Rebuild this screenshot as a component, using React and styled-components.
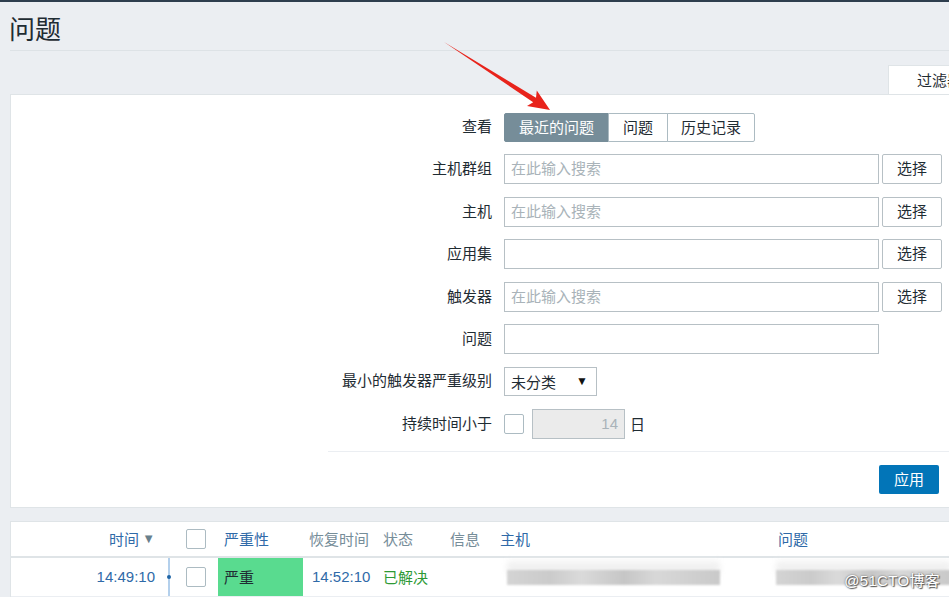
import React from 'react'
import styled, { createGlobalStyle } from 'styled-components'

const GlobalStyle = createGlobalStyle`
  html, body {
    margin: 0;
    padding: 0;
    background: #ebeef2;
    overflow: hidden;
  }
  body {
    font-family: "Liberation Sans", "Noto Sans CJK SC", sans-serif;
    font-size: 15px;
    color: #1f2c33;
  }
`

const Page = styled.div`
  position: relative;
  width: 975px;
  border-top: 2px solid #2e3e4e;
`

const Header = styled.div`
  height: 49px;
  margin-left: 10px;
  display: flex;
  align-items: center;
  padding-top: 2px;
  box-sizing: border-box;
  border-bottom: 1px solid #dde2e6;
`

const Title = styled.h1`
  margin: 0 0 0 -1px;
  font-size: 26px;
  font-weight: normal;
  color: #1f2c33;
`

const TabRow = styled.div`
  display: flex;
  justify-content: flex-end;
  margin-top: 14px;
`

const Tab = styled.div`
  height: 29px;
  line-height: 29px;
  padding: 0 12px 0 28px;
  background: #fff;
  border: 1px solid #dfe4e7;
  border-bottom: none;
  box-sizing: border-box;
  font-size: 15px;
`

const Panel = styled.div`
  margin-left: 10px;
  background: #fff;
  border: 1px solid #dfe4e7;
  border-right: none;
`

const FilterPanel = styled(Panel)`
  padding: 17px 0 13px;
`

const Form = styled.div`
  display: grid;
  grid-template-columns: 481px auto;
  column-gap: 12px;
  row-gap: 12.4px;
  align-items: center;
`

const Label = styled.div`
  text-align: right;
  line-height: 30px;
  white-space: nowrap;
`

const Field = styled.div`
  display: flex;
  align-items: center;
  gap: 3px;
`

const Segments = styled.div`
  display: flex;
`

const Segment = styled.div`
  height: 29px;
  line-height: 27px;
  padding: 0 14px;
  box-sizing: border-box;
  border: 1px solid ${p => (p.$active ? '#768d99' : '#acbbc2')};
  margin-left: -1px;
  background: ${p => (p.$active ? '#768d99' : '#fff')};
  color: ${p => (p.$active ? '#fff' : '#1f2c33')};
  &:first-child {
    margin-left: 0;
    border-radius: 2px 0 0 2px;
  }
  &:last-child {
    padding: 0 13px;
    border-radius: 0 2px 2px 0;
  }
`

const TextInput = styled.div`
  width: ${p => p.$w || 375}px;
  height: 30px;
  line-height: 28px;
  box-sizing: border-box;
  border: 1px solid #b7c0c5;
  padding: 0 6px;
  color: #a9b3b9;
  background: ${p => (p.$disabled ? '#ebebeb' : '#fff')};
  text-align: ${p => (p.$right ? 'right' : 'left')};
`

const SelectButton = styled.div`
  width: 60px;
  height: 30px;
  line-height: 28px;
  box-sizing: border-box;
  border: 1px solid #b7c0c5;
  border-radius: 2px;
  text-align: center;
  background: #fff;
`

const Select = styled.div`
  width: 93px;
  height: 29px;
  box-sizing: border-box;
  border: 1px solid #b7c0c5;
  padding: 0 8px 0 6px;
  display: flex;
  align-items: center;
  justify-content: space-between;
  span:last-child {
    font-size: 12px;
    color: #111;
  }
`

const Check = styled.div`
  width: 20px;
  height: 20px;
  box-sizing: border-box;
  border: 1px solid #acbbc2;
  border-radius: 2px;
  background: #fff;
`

const DurationField = styled(Field)`
  gap: 8px;
  span {
    margin-left: -3px;
  }
`

const Footer = styled.div`
  margin: 12px 0 0 317px;
  padding: 13px 36px 0 0;
  border-top: 1px solid #ebeef2;
  display: flex;
  justify-content: flex-end;
`

const ApplyButton = styled.div`
  width: 60px;
  height: 29px;
  line-height: 29px;
  text-align: center;
  background: #0275b8;
  color: #fff;
  border-radius: 2px;
`

const TablePanel = styled(Panel)`
  margin-top: 13px;
  position: relative;
`

const Row = styled.div`
  display: grid;
  grid-template-columns: 152px 13px 42px 85px 74px 67px 50px 278px 1fr;
  height: ${p => (p.$head ? 34 : 38)}px;
  align-items: center;
  border-bottom: ${p => (p.$head ? '2px solid #dfe4e7' : '1px solid #ebeef2')};
`

const Cell = styled.div`
  height: 100%;
  display: flex;
  align-items: center;
  padding-left: ${p => p.$pad ?? 6}px;
  justify-content: ${p => (p.$right ? 'flex-end' : 'flex-start')};
  padding-right: ${p => (p.$right ? 8 : 0)}px;
  color: ${p => p.$color || '#1f2c33'};
  background: ${p => p.$bg || 'transparent'};
  box-sizing: border-box;
  white-space: nowrap;
  position: relative;
`

const SortArrow = styled.span`
  font-size: 13px;
  color: #68808c;
  margin-left: 3px;
`

const Timeline = styled.div`
  height: 100%;
  position: relative;
  &::before {
    content: '';
    position: absolute;
    left: 5px;
    top: 0;
    bottom: 0;
    width: 2px;
    background: ${p => (p.$line ? '#b4d0ec' : 'transparent')};
  }
  &::after {
    content: '';
    position: absolute;
    left: 4px;
    top: 17px;
    width: 4px;
    height: 4px;
    border-radius: 50%;
    background: ${p => (p.$line ? '#1f65a6' : 'transparent')};
  }
`

const Blur = styled.div`
  width: ${p => p.$w}px;
  height: 15px;
  margin-top: 2px;
  background: linear-gradient(90deg, #d4d4d4 0%, #cbcbcb 20%, #dadada 35%, #c6c6c6 55%, #d8d8d8 70%, #c9c9c9 100%);
  box-shadow: 0 -9px 6px #f1f1f1;
  filter: blur(1.2px);
`

const Watermark = styled.div`
  position: absolute;
  right: 35px;
  top: 47px;
  color: #fff;
  font-size: 15px;
  letter-spacing: 0.3px;
  text-shadow: 0 0 2px #555, 1px 1px 1px #555;
`

const Arrow = styled.svg`
  position: absolute;
  left: 0;
  top: -2px;
  pointer-events: none;
`

const blue = '#2f6aa8'
const gray = '#768d99'

const fields = [
  { label: '主机群组', placeholder: '在此输入搜索', button: true },
  { label: '主机', placeholder: '在此输入搜索', button: true },
  { label: '应用集', placeholder: '', button: true },
  { label: '触发器', placeholder: '在此输入搜索', button: true },
  { label: '问题', placeholder: '', button: false },
]

export default function App() {
  return (
    <>
      <GlobalStyle />
      <Page>
        <Header>
          <Title>问题</Title>
        </Header>

        <TabRow>
          <Tab>过滤器</Tab>
        </TabRow>

        <FilterPanel>
          <Form>
            <Label>查看</Label>
            <Segments>
              <Segment $active>最近的问题</Segment>
              <Segment>问题</Segment>
              <Segment>历史记录</Segment>
            </Segments>

            {fields.map(f => (
              <React.Fragment key={f.label}>
                <Label>{f.label}</Label>
                <Field>
                  <TextInput>{f.placeholder}</TextInput>
                  {f.button && <SelectButton>选择</SelectButton>}
                </Field>
              </React.Fragment>
            ))}

            <Label>最小的触发器严重级别</Label>
            <Field>
              <Select>
                <span>未分类</span>
                <span>▼</span>
              </Select>
            </Field>

            <Label>持续时间小于</Label>
            <DurationField>
              <Check />
              <TextInput $w={93} $disabled $right>14</TextInput>
              <span>日</span>
            </DurationField>
          </Form>

          <Footer>
            <ApplyButton>应用</ApplyButton>
          </Footer>
        </FilterPanel>

        <TablePanel>
          <Row $head>
            <Cell $right $color={blue}>
              时间<SortArrow>▼</SortArrow>
            </Cell>
            <Timeline />
            <Cell $pad={10}><Check /></Cell>
            <Cell $color={blue}>严重性</Cell>
            <Cell $color={gray}>恢复时间</Cell>
            <Cell $color={gray}>状态</Cell>
            <Cell $color={gray}>信息</Cell>
            <Cell $color={blue}>主机</Cell>
            <Cell $color={blue}>问题</Cell>
          </Row>
          <Row>
            <Cell $right $color={blue}>14:49:10</Cell>
            <Timeline $line />
            <Cell $pad={10}><Check /></Cell>
            <Cell $bg="#59db8f">严重</Cell>
            <Cell $pad={9} $color={blue}>14:52:10</Cell>
            <Cell $color="#2e9a35">已解决</Cell>
            <Cell />
            <Cell $pad={13}><Blur $w={213} /></Cell>
            <Cell $pad={4}><Blur $w={175} /></Cell>
          </Row>
          <Row>
            <Cell />
            <Timeline $line />
            <Cell />
            <Cell $bg="#ffc859" />
            <Cell />
            <Cell />
            <Cell />
            <Cell />
            <Cell />
          </Row>
          <Watermark>@51CTO博客</Watermark>
        </TablePanel>

        <Arrow width="600" height="130" viewBox="0 0 600 130">
          <polygon
            points="444,42 536,97.8 536.8,90.6 550,110 527,106 533.2,102.2"
            fill="#e8231b"
          />
        </Arrow>
      </Page>
    </>
  )
}
